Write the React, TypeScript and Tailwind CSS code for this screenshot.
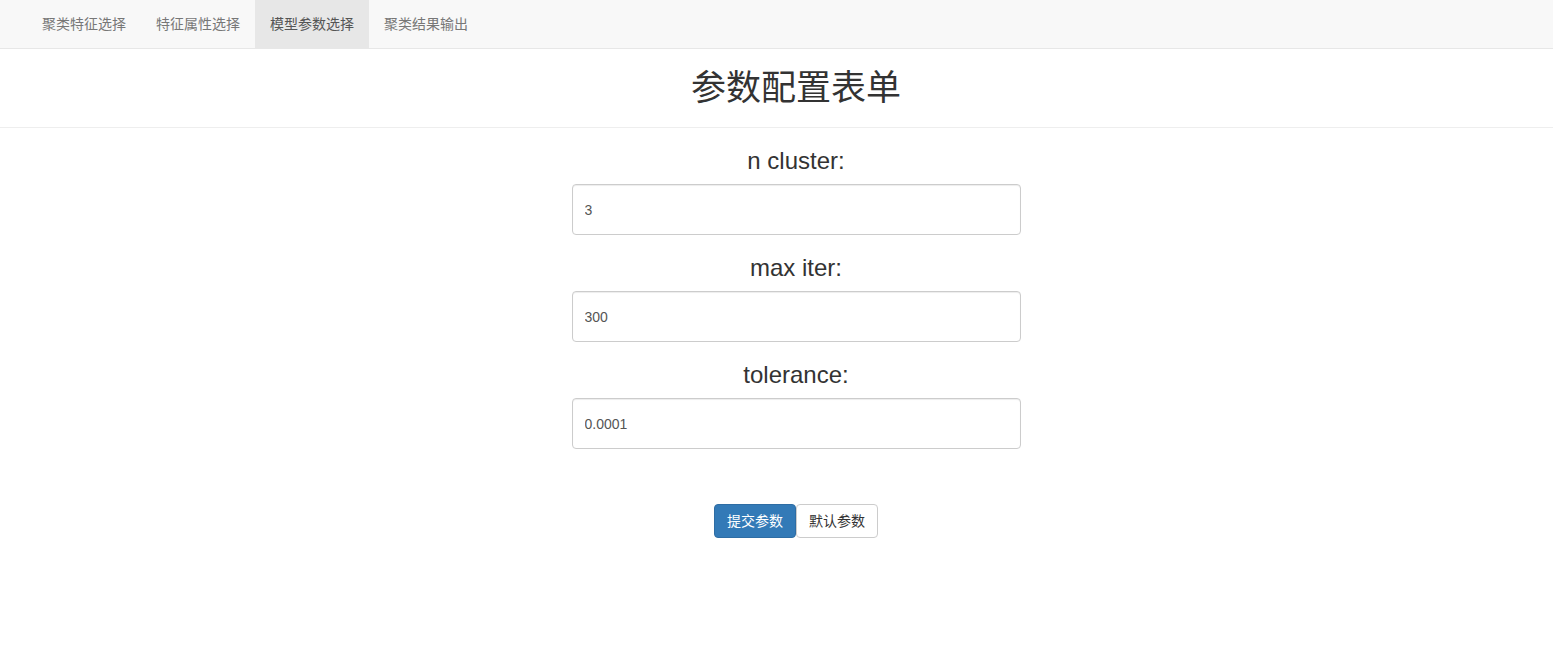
import React, { useState } from "react";

const tabs = ["聚类特征选择", "特征属性选择", "模型参数选择", "聚类结果输出"];

const fields = [
  { label: "n cluster:", value: "3" },
  { label: "max iter:", value: "300" },
  { label: "tolerance:", value: "0.0001" },
];

export default function App() {
  const [active] = useState(2);

  return (
    <div
      className="min-h-[651px] bg-white text-[#333]"
      style={{ fontFamily: '"Liberation Sans", Arial, "Noto Sans CJK SC", sans-serif' }}
    >
      <nav className="flex h-[49px] border-b border-[#e7e7e7] bg-[#f8f8f8] pl-[27px]">
        {tabs.map((t, i) => (
          <a
            key={t}
            href="#"
            className={
              i === active
                ? "flex h-[48px] items-center bg-[#e7e7e7] px-[15px] text-[14px] text-[#555]"
                : "flex h-[48px] items-center px-[15px] text-[14px] text-[#777]"
            }
          >
            {t}
          </a>
        ))}
      </nav>

      <div className="flex h-[79px] items-center justify-center border-b border-[#eee] pl-[39px]">
        <h1 className="text-[35px] leading-[40px] font-normal">参数配置表单</h1>
      </div>

      <form className="flex flex-col items-center pl-[39px] pt-[20px]">
        {fields.map((f) => (
          <div key={f.label} className="mb-[20px] flex flex-col items-center">
            <label className="mb-[10px] block h-[26px] text-[24px] leading-[26px]">
              {f.label}
            </label>
            <input
              defaultValue={f.value}
              className="h-[51px] w-[449px] rounded-[4px] border border-[#ccc] px-[12px] text-[14px] text-[#555] shadow-[inset_0_1px_1px_rgba(0,0,0,0.075)] outline-none"
            />
          </div>
        ))}

        <div className="mt-[35px] flex">
          <button
            type="button"
            className="h-[34px] rounded-[4px] border border-[#2e6da4] bg-[#337ab7] px-[12px] text-[14px] text-white"
          >
            提交参数
          </button>
          <button
            type="button"
            className="h-[34px] rounded-[4px] border border-[#ccc] bg-white px-[12px] text-[14px] text-[#333]"
          >
            默认参数
          </button>
        </div>
      </form>
    </div>
  );
}
